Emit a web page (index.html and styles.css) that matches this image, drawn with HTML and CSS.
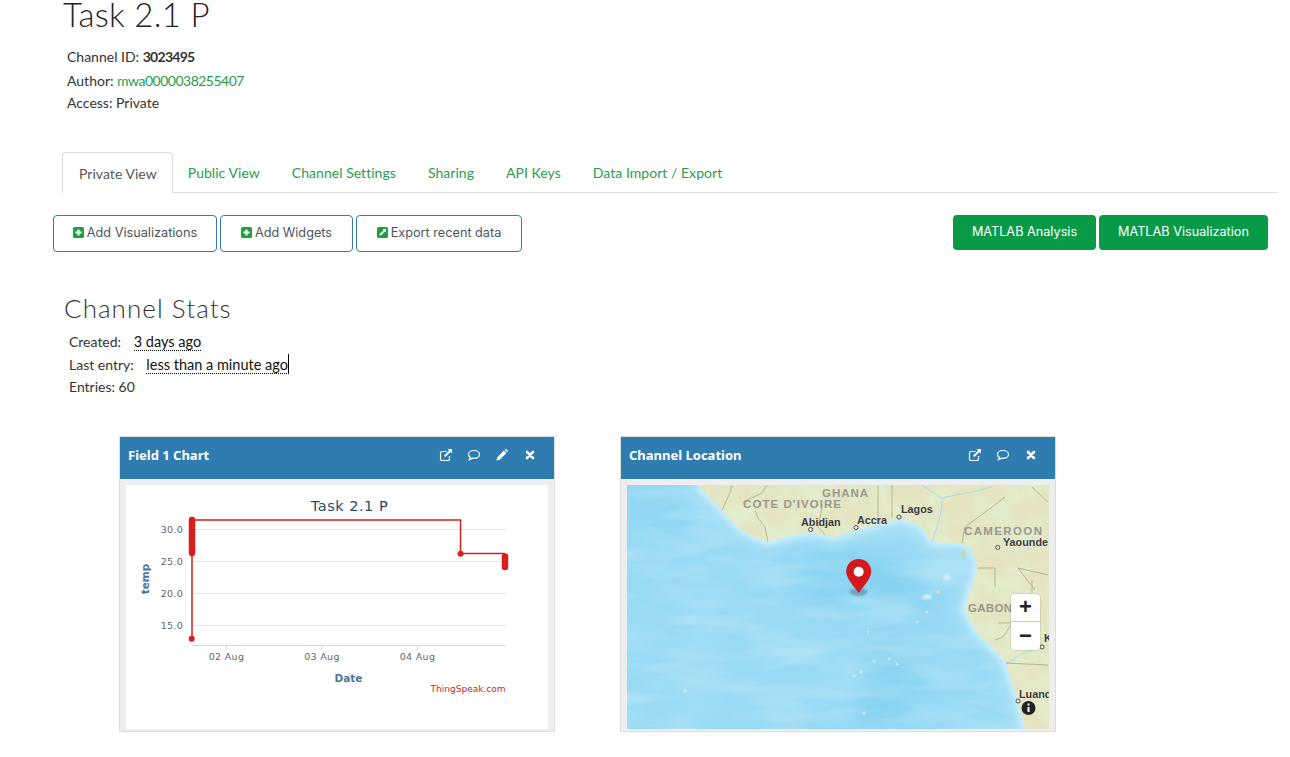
FILE: index.html
```html
<!DOCTYPE html>
<html lang="en">
<head>
<meta charset="utf-8">
<title>Task 2.1 P - ThingSpeak</title>
<link rel="stylesheet" href="styles.css">
</head>
<body>
<svg class="defs" width="0" height="0" aria-hidden="true">
  <symbol id="i-plus" viewBox="0 0 12 12"><rect width="12" height="12" rx="2" fill="#1e9e3e"/><path d="M6 2.6v6.8M2.6 6h6.8" stroke="#fff" stroke-width="2.2"/></symbol>
  <symbol id="i-export" viewBox="0 0 12 12"><rect width="12" height="12" rx="2" fill="#1e9e3e"/><path d="M6 2.2h3.8V6L8.5 4.8 4 9.6 2.4 8 7.2 3.5z" fill="#fff"/></symbol>
  <symbol id="i-link" viewBox="0 0 14 14"><path d="M10.5 8v3a1.5 1.5 0 0 1-1.5 1.5H3A1.5 1.5 0 0 1 1.500 11V5A1.500 1.500 0 0 1 3 3.500h4.500" fill="none" stroke="#fff" stroke-width="1.200"/><path d="M8.500 1h4.500v4.500l-1.600-1.600-5.100 5.100-1.300-1.300 5.100-5.100z" fill="#fff"/></symbol>
  <symbol id="i-comment" viewBox="0 0 14 14"><path d="M7 2.500c3.200 0 5.500 1.700 5.500 3.900S10.200 10.300 7 10.300c-.6 0-1.100 0-1.700-.2-.8.800-1.800 1.400-3 1.600.6-.8 1-1.500 1-2.400C2.200 8.600 1.500 7.600 1.500 6.400 1.500 4.200 3.800 2.500 7 2.500z" fill="none" stroke="#fff" stroke-width="1.200"/></symbol>
  <symbol id="i-pencil" viewBox="0 0 14 14"><path d="M1.500 12.500l.8-3.300 6.600-6.600 2.500 2.500-6.600 6.600zM9.700 1.800l.8-.6c.4-.3.8-.3 1.100 0l1.200 1.200c.3.300.3.700 0 1.100l-.6.800z" fill="#fff"/></symbol>
  <symbol id="i-close" viewBox="0 0 14 14"><path d="M4 4l6 6M10 4l-6 6" stroke="#fff" stroke-width="2.600" stroke-linecap="round"/></symbol>
</svg>

<main class="page">
  <header class="head">
    <h1 class="title">Task 2.1 P</h1>
    <ul class="meta">
      <li>Channel ID: <strong>3023495</strong></li>
      <li>Author: <a class="link" href="#">mwa0000038255407</a></li>
      <li>Access: Private</li>
    </ul>
  </header>

  <nav class="tabs">
    <a class="tab tab-active" href="#">Private View</a>
    <a class="tab" href="#">Public View</a>
    <a class="tab" href="#">Channel Settings</a>
    <a class="tab" href="#">Sharing</a>
    <a class="tab" href="#">API Keys</a>
    <a class="tab" href="#">Data Import / Export</a>
  </nav>

  <div class="toolbar">
    <div class="btn-group">
      <a class="btn btn-outline btn-a" href="#"><svg class="btn-icon"><use href="#i-plus"/></svg>Add Visualizations</a>
      <a class="btn btn-outline btn-b" href="#"><svg class="btn-icon"><use href="#i-plus"/></svg>Add Widgets</a>
      <a class="btn btn-outline btn-c" href="#"><svg class="btn-icon"><use href="#i-export"/></svg>Export recent data</a>
    </div>
    <div class="btn-group">
      <a class="btn btn-green btn-d" href="#">MATLAB Analysis</a>
      <a class="btn btn-green btn-e" href="#">MATLAB Visualization</a>
    </div>
  </div>

  <section class="stats">
    <h2 class="stats-title">Channel Stats</h2>
    <ul class="meta stats-list">
      <li>Created: <abbr class="time time-a">3 days ago</abbr></li>
      <li>Last entry: <abbr class="time time-b">less than a minute ago</abbr></li>
      <li>Entries: 60</li>
    </ul>
  </section>

  <section class="panels">
    <article class="panel">
      <div class="panel-head">
        <span class="panel-title">Field 1 Chart</span>
        <span class="panel-tools">
          <svg class="tool"><use href="#i-link"/></svg>
          <svg class="tool"><use href="#i-comment"/></svg>
          <svg class="tool"><use href="#i-pencil"/></svg>
          <svg class="tool"><use href="#i-close"/></svg>
        </span>
      </div>
      <div class="panel-body">
        <svg class="viz" viewBox="126 485 422 244">
          <rect x="126" y="485" width="422" height="244" fill="#fff"/>
          <text class="c-title" x="349.500" y="511" text-anchor="middle">Task 2.1 P</text>
          <g class="c-grid">
            <path d="M192 529.500H506M192 561.500H506M192 593.500H506M192 625.500H506"/>
          </g>
          <path class="c-axis" d="M192 645.500H506M226.500 645V650M322 645V650M417.500 645V650"/>
          <g class="c-tick" text-anchor="end">
            <text x="183" y="533">30.0</text>
            <text x="183" y="565">25.0</text>
            <text x="183" y="597">20.0</text>
            <text x="183" y="629">15.0</text>
          </g>
          <g class="c-tick" text-anchor="middle">
            <text x="226.500" y="660">02 Aug</text>
            <text x="322" y="660">03 Aug</text>
            <text x="417.500" y="660">04 Aug</text>
          </g>
          <text class="c-label" x="348.500" y="682" text-anchor="middle">Date</text>
          <text class="c-label" transform="translate(149 579) rotate(-90)" text-anchor="middle">temp</text>
          <text class="c-credit" x="505.500" y="692" text-anchor="end">ThingSpeak.com</text>
          <path class="c-line" d="M192 639V520H460.500V553.500H505"/>
          <path class="c-blob" d="M192 520V553"/>
          <path class="c-blob" d="M505 556.500V567"/>
          <circle class="c-dot" cx="191.700" cy="638.700" r="3"/>
          <circle class="c-dot" cx="460.500" cy="553.700" r="3"/>
        </svg>
      </div>
    </article>

    <article class="panel">
      <div class="panel-head">
        <span class="panel-title">Channel Location</span>
        <span class="panel-tools">
          <svg class="tool"><use href="#i-link"/></svg>
          <svg class="tool"><use href="#i-comment"/></svg>
          <svg class="tool"><use href="#i-close"/></svg>
        </span>
      </div>
      <div class="panel-body map-body">
        <svg class="viz" viewBox="627 485 422 244">
          <defs>
            <filter id="b8" x="-30%" y="-30%" width="160%" height="160%"><feGaussianBlur stdDeviation="9"/></filter>
            <filter id="b6" x="-30%" y="-30%" width="160%" height="160%"><feGaussianBlur stdDeviation="6"/></filter>
            <filter id="b3" x="-30%" y="-30%" width="160%" height="160%"><feGaussianBlur stdDeviation="2.500"/></filter>
            <filter id="b1" x="-50%" y="-50%" width="200%" height="200%"><feGaussianBlur stdDeviation="1"/></filter>
            <filter id="noise" x="0" y="0" width="100%" height="100%">
              <feTurbulence type="fractalNoise" baseFrequency="0.04" numOctaves="4" seed="4"/>
              <feColorMatrix values="0 0 0 0 0.76  0 0 0 0 0.84  0 0 0 0 0.60  2.600 0 0 0 -0.950"/>
            </filter>
            <filter id="waves" x="0" y="0" width="100%" height="100%">
              <feTurbulence type="fractalNoise" baseFrequency="0.012 0.05" numOctaves="3" seed="9"/>
              <feColorMatrix values="0 0 0 0 0.72  0 0 0 0 0.91  0 0 0 0 0.98  2.800 0 0 0 -1.150"/>
            </filter>
            <clipPath id="land-clip"><path d="M698 485L707 495 722 510 738 527 755 537 768 542 792 535 812 532 835 537 855 530 882 523 902 518 922 527 932 542 962 543 972 550 978 567 972 587 968 600 965 610 978 633 1005 660 1008 670 1018 700 1025 729H1049V485z"/></clipPath>
          </defs>
          <rect x="627" y="485" width="422" height="244" fill="#98d9f4"/>
          <path d="M790 550C830 545 900 550 925 590S880 625 840 610 770 575 790 550z" fill="#87d3f1" filter="url(#b8)"/>
          <path d="M880 650c25-10 45 10 45 35s-30 40-65 38c-15-8 0-60 20-73z" fill="#87d3f1" filter="url(#b8)"/>
          <path d="M627 490h55l15 20 25 22-30 6-40-10-25-15z" fill="#8bd4f1" opacity=".6" filter="url(#b8)"/>
          <rect x="627" y="485" width="422" height="244" filter="url(#waves)" opacity=".3"/>
          <path d="M700 600c22 15 28 70 16 120h-40c-6-40 2-90 24-120z" fill="#a9e0f6" opacity=".45" filter="url(#b8)"/>
          <path class="halo-wide" d="M698 485L722 510 738 527 755 537 768 542 792 535 812 532 835 537 855 530 882 523 902 518 922 527 932 542 962 543 972 550 978 567 972 587 968 600 965 610 978 633 1005 660 1008 670 1018 700 1025 729" filter="url(#b6)"/>
          <path class="halo" d="M698 485L722 510 738 527 755 537 768 542 792 535 812 532 835 537 855 530 882 523 902 518 922 527 932 542 962 543 972 550 978 567 972 587 968 600 965 610 978 633 1005 660 1008 670 1018 700 1025 729" filter="url(#b3)"/>
          <g class="isles">
            <circle cx="685" cy="691" r="1.500"/><circle cx="854" cy="676" r="1.200"/><circle cx="861" cy="672" r="1.500"/><circle cx="874" cy="661" r="1.200"/><circle cx="889" cy="659" r="1.200"/><circle cx="897" cy="664" r="1.200"/><circle cx="864" cy="713" r="1.500"/><circle cx="927" cy="612" r="1.200"/><circle cx="917" cy="622" r="1.200"/><circle cx="868" cy="632" r="1"/><circle cx="947" cy="577" r="3" filter="url(#b1)"/><ellipse cx="927" cy="597" rx="5" ry="2" filter="url(#b1)"/>
          </g>
          <ellipse cx="963" cy="553" rx="2" ry="3" fill="#d6cfa3"/>
          <ellipse cx="938" cy="592" rx="2" ry="2" fill="#e0d9b0"/>
          <g clip-path="url(#land-clip)">
            <rect x="627" y="485" width="422" height="244" fill="#e4e4c0"/>
            <rect x="627" y="485" width="422" height="244" filter="url(#noise)"/>
            <path class="river" d="M922 485L942 498C958 494 975 492 992 487M942 498C942 515 936 530 932 542M1005 665C1014 660 1018 655 1025 653S1036 648 1042 647"/>
            <path class="border" d="M732 485L730 493 722 510M755 510L758 518 765 527 768 542M767 485L762 493 743 502M878 485V520M892 485V518M822 508L818 527 825 535M1048 502L1032 487M1005 497L988 510 965 527 962 543M973 568H995V587M1018 568L1048 575M1018 568L1035 590M1032 580V593M998 623H1012L1003 637 995 640M1005 663L1048 665"/>
            <text class="m-country" x="822" y="497" textLength="46">GHANA</text>
            <text class="m-country" x="743" y="508" textLength="98">COTE D'IVOIRE</text>
            <text class="m-country" x="964" y="535" textLength="78">CAMEROON</text>
            <text class="m-country" x="968" y="612" textLength="44">GABON</text>
          </g>
          <g class="m-city">
            <text x="801" y="526">Abidjan</text>
            <text x="857" y="524">Accra</text>
            <text x="901" y="513">Lagos</text>
            <text x="1003" y="546">Yaounde</text>
            <text x="1019" y="698">Luanda</text>
            <text x="1044" y="642">K</text>
          </g>
          <g class="m-pt">
            <circle cx="810.700" cy="529.500" r="2"/><circle cx="856" cy="527.500" r="2"/><circle cx="899" cy="517" r="2"/><circle cx="997.700" cy="547.500" r="2"/><circle cx="1018" cy="701" r="2"/><circle cx="1042" cy="647" r="2"/>
          </g>
          <ellipse cx="858.500" cy="592" rx="9" ry="4" fill="#4d7f8f" opacity=".55" filter="url(#b1)"/>
          <path d="M858.700 559c7 0 12.500 5.500 12.500 12.400 0 7.600-8 14.600-12.500 21.600-4.500-7-12.500-14-12.500-21.600 0-6.900 5.500-12.400 12.500-12.400z" fill="#d4191c"/>
          <circle cx="858.700" cy="571.700" r="5" fill="#fff"/>
          <circle cx="1028.500" cy="708" r="7" fill="#222"/>
          <path d="M1028.500 703.500v2M1028.500 707v5" stroke="#fff" stroke-width="2"/>
        </svg>
        <div class="zoom">
          <span class="zoom-btn">+</span>
          <span class="zoom-btn">−</span>
        </div>
      </div>
    </article>
  </section>
</main>
</body>
</html>
```

FILE: styles.css
```css
* { box-sizing: border-box; }
html, body { margin: 0; padding: 0; height: 757px; overflow: hidden; background: #fff; }
body { font-family: "Lato", "Liberation Sans", sans-serif; font-size: 14px; color: #333; }
a { text-decoration: none; }
.defs { position: absolute; }
.page { display: flex; flex-direction: column; }

.head { padding-left: 63px; }
.title { margin: 0; font: 300 33px/28px "Lato", sans-serif; color: #222; letter-spacing: .3px; }
.meta { list-style: none; margin: 0; padding: 0; }
.head .meta { margin-top: 17px; padding-left: 4px; }
.meta li { line-height: 23px; }
.meta strong { letter-spacing: -.72px; }
.head .meta li:first-child { line-height: 24px; }
.head .meta li:last-child { line-height: 22px; }
.link { color: #2a9d4b; letter-spacing: -.5px; }

.tabs { display: flex; margin: 38px 13px 0 62px; height: 41px; border-bottom: 1px solid #ddd; letter-spacing: .04px; }
.tab { padding: 0 16px; line-height: 41px; color: #2a9d4b; }
.tab-active { color: #555; border: 1px solid #ddd; border-bottom: 0; padding-right: 15px; margin-right: -1px; background: #fff; border-radius: 4px 4px 0 0; height: 41px; }

.toolbar { display: flex; justify-content: space-between; margin: 22px 22px 0 53px; }
.btn-group { display: flex; gap: 3px; }
.btn { display: flex; align-items: center; justify-content: center; border-radius: 4px; font-family: "Inter", "Lato", sans-serif; font-size: 12.7px; }
.btn-outline { height: 37px; padding-bottom: 3px; border: 1px solid #337ab7; color: #4a5560; }
.btn-green { height: 35px; padding-bottom: 3px; background: #099a48; color: #fff; }
.btn-a { width: 164px; } .btn-b { width: 133px; } .btn-c { width: 166px; }
.btn-d { width: 143px; } .btn-e { width: 169px; }
.btn-icon { width: 11px; height: 11px; margin-right: 3px; }

.stats { margin: 42px 0 0 64px; }
.stats-title { margin: 0; font: 300 26px/28px "Lato", sans-serif; color: #333; letter-spacing: 1.05px; }
.stats-list { margin-top: 9px; padding-left: 5px; }
.stats-list li { line-height: 22.5px; }
.time { font-size: 14.5px; color: #111; border-bottom: 1px dotted #000; text-decoration: none; margin-left: 9px; }
.time-b { border-right: 1px solid #000; padding-top: 2px; }

.panels { display: flex; gap: 65px; margin: 37px 0 0 119px; }
.panel { width: 436px; height: 296px; background: #eee; border: 1px solid #ddd; }
.panel-head { display: flex; align-items: center; justify-content: space-between; height: 42px; padding: 0 17px 6px 8px; background: #2e7cb0; color: #fff; }
.panel-title { font: 700 13px/20px "Noto Sans", sans-serif; }
.panel-tools { display: flex; gap: 14px; }
.tool { width: 14px; height: 14px; }
.panel-body { padding: 6px 6px 0; }
.map-body { position: relative; }
.viz { display: block; width: 422px; height: 244px; }

.c-title { font: 14.500px "DejaVu Sans", sans-serif; fill: #274b6d; letter-spacing: .5px; }
.c-grid path { stroke: #e6e6e6; fill: none; }
.c-axis { stroke: #d0dbe8; fill: none; }
.c-tick text { font: 9.500px "DejaVu Sans", sans-serif; fill: #666; letter-spacing: .3px; }
.c-label { font: 700 10.500px "DejaVu Sans", sans-serif; fill: #4d759e; }
.c-credit { font: 9px "DejaVu Sans", sans-serif; fill: #d62020; }
.c-line { fill: none; stroke: #d91e1e; stroke-width: 1.500; }
.c-blob { fill: none; stroke: #d91e1e; stroke-width: 6.500; stroke-linecap: round; }
.c-dot { fill: #d91e1e; }

.halo-wide { fill: none; stroke: #a9e1f7; stroke-width: 22; }
.halo { fill: none; stroke: #c8edfa; stroke-width: 8; }
.isles { fill: #d9f2fc; }
.border { fill: none; stroke: #a9a98e; stroke-width: .8; }
.river { fill: none; stroke: #a8dcef; stroke-width: 1; }
.m-country { font: 700 11.500px "Liberation Sans", sans-serif; fill: #98988f; }
.m-city { font: 700 10.800px "Liberation Sans", sans-serif; fill: #3a3a3a; stroke: #fff; stroke-width: .3; paint-order: stroke; }
.m-pt { fill: #fff; stroke: #444; stroke-width: 1; }

.zoom { position: absolute; left: 390px; top: 115px; width: 29px; height: 56px; display: flex; flex-direction: column; background: #fff; border-radius: 4px; box-shadow: 0 0 0 1px rgba(0,0,0,.08); }
.zoom-btn { flex: 1; display: flex; align-items: center; justify-content: center; font: 700 22px/1 "Liberation Sans", sans-serif; color: #222; }
.zoom-btn + .zoom-btn { border-top: 1px solid #ccc; }
```
